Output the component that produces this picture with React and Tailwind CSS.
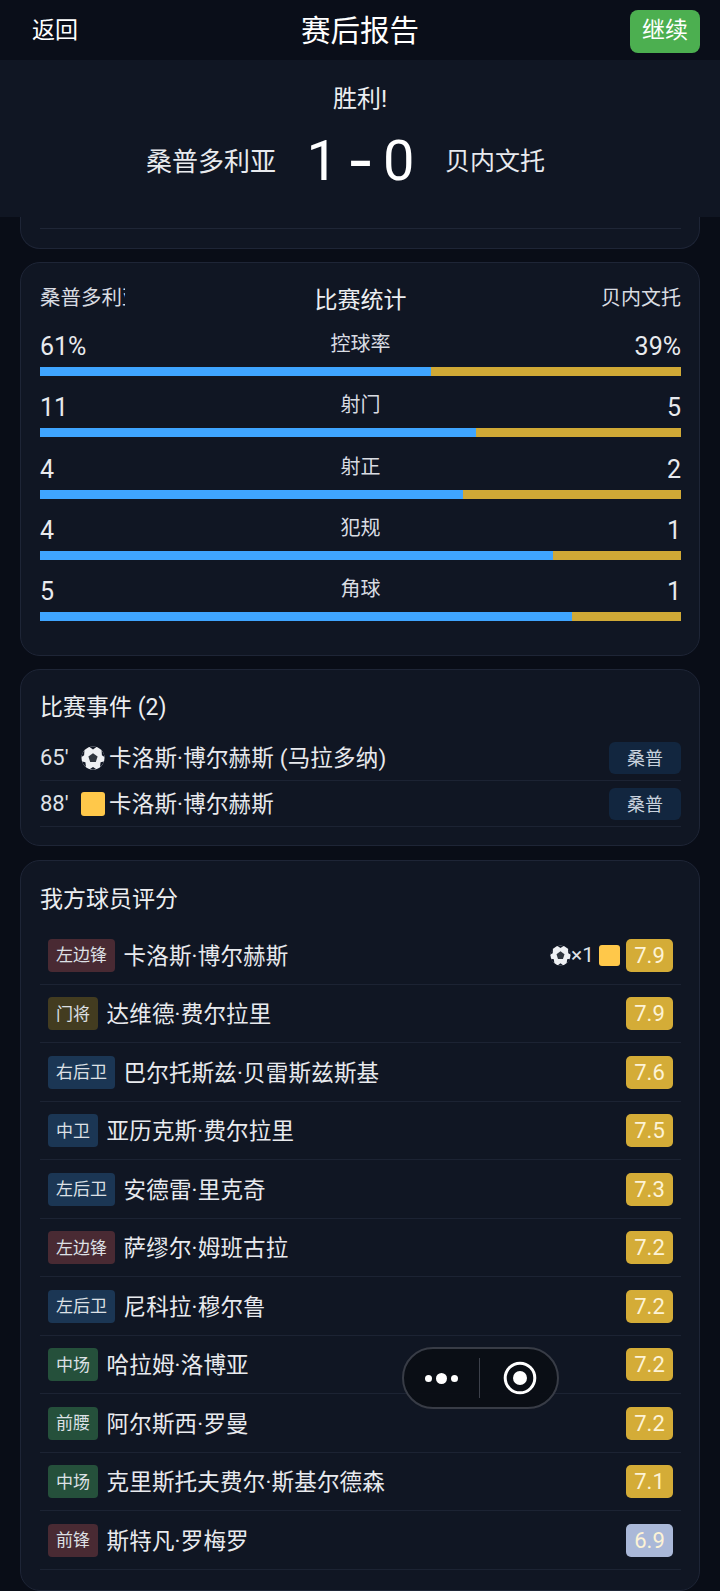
import React from "react";

const fontStack = { fontFamily: 'Roboto, "Noto Sans CJK SC", sans-serif' };

const stats = [
  { label: "控球率", left: "61%", right: "39%", pct: 61 },
  { label: "射门", left: "11", right: "5", pct: 68 },
  { label: "射正", left: "4", right: "2", pct: 66 },
  { label: "犯规", left: "4", right: "1", pct: 80 },
  { label: "角球", left: "5", right: "1", pct: 83 },
];

const players = [
  { pos: "左边锋", tone: "bg-[#492a33]", name: "卡洛斯·博尔赫斯", rating: "7.9", extras: true },
  { pos: "门将", tone: "bg-[#433c20]", name: "达维德·费尔拉里", rating: "7.9" },
  { pos: "右后卫", tone: "bg-[#1b3654]", name: "巴尔托斯兹·贝雷斯兹斯基", rating: "7.6" },
  { pos: "中卫", tone: "bg-[#1b3654]", name: "亚历克斯·费尔拉里", rating: "7.5" },
  { pos: "左后卫", tone: "bg-[#1b3654]", name: "安德雷·里克奇", rating: "7.3" },
  { pos: "左边锋", tone: "bg-[#492a33]", name: "萨缪尔·姆班古拉", rating: "7.2" },
  { pos: "左后卫", tone: "bg-[#1b3654]", name: "尼科拉·穆尔鲁", rating: "7.2" },
  { pos: "中场", tone: "bg-[#25503b]", name: "哈拉姆·洛博亚", rating: "7.2" },
  { pos: "前腰", tone: "bg-[#25503b]", name: "阿尔斯西·罗曼", rating: "7.2" },
  { pos: "中场", tone: "bg-[#25503b]", name: "克里斯托夫费尔·斯基尔德森", rating: "7.1" },
  { pos: "前锋", tone: "bg-[#492a33]", name: "斯特凡·罗梅罗", rating: "6.9", low: true },
];

function Ball({ className }) {
  return (
    <svg viewBox="0 0 24 24" className={className}>
      <circle cx="12" cy="12" r="11.5" fill="#eef0f3" />
      <path d="M12 7.2l4.6 3.3-1.8 5.4H9.2l-1.8-5.4z" fill="#30363f" />
      <path d="M8.6 1.1C9.7.7 10.8.5 12 .5s2.3.2 3.4.6L12 3.4z" fill="#121826" />
      <path d="M20.6 4.3c1.6 1.8 2.6 4 2.9 6.6l-2.6-1.6z" fill="#121826" />
      <path d="M3.4 4.3C1.8 6.1.8 8.3.5 10.900l2.600-1.600z" fill="#121826" />
      <path d="M5 21.100c-1.800-1.400-3.100-3.300-3.900-5.500l3.300.6z" fill="#121826" />
      <path d="M19 21.100c1.800-1.400 3.100-3.300 3.900-5.500l-3.300.6z" fill="#121826" />
      <path d="M9 23.100c2 .5 4 .5 6 0l-3-2.200z" fill="#121826" />
    </svg>
  );
}

function EventRow({ time, icon, text, compact }) {
  return (
    <div className={`flex items-center border-b border-[#1c2333] pb-[6px] ${compact ? "pt-[7px]" : "pt-[8px]"}`}>
      <span className="w-[41px] text-[22px] leading-[32px] text-[#dfe2e8]">{time}</span>
      {icon}
      <span className="ml-[4px] flex-1 text-[22.500px] leading-[32px] tracking-[0.2px] text-[#e8eaee]">{text}</span>
      <span className="flex h-[32px] w-[72px] items-center justify-center rounded-[6px] bg-[#12263f] text-[18px] text-[#c9d2de]">
        桑普
      </span>
    </div>
  );
}

export default function App() {
  return (
    <div
      style={fontStack}
      className="relative flex h-[1591px] w-[720px] flex-col overflow-hidden bg-[#090d17] text-[#e8eaee]"
    >
      {/* top bar */}
      <div className="flex h-[60px] items-center justify-between bg-[#0a0e19] pt-[2px] pr-[20px] pl-[32px]">
        <span className="w-[88px] text-[23px] text-white">返回</span>
        <span className="text-[29.500px] text-white">赛后报告</span>
        <div className="flex w-[100px] justify-end">
          <span className="flex h-[43px] w-[70px] items-center justify-center rounded-[8px] bg-[#4caf50] text-[23px] text-white">
            继续
          </span>
        </div>
      </div>

      {/* score */}
      <div className="flex h-[157px] flex-col items-center bg-[#101623]">
        <div className="mt-[22px] text-[24px] leading-[34px] text-[#eceef1]">胜利!</div>
        <div className="mt-[8px] flex w-full items-center">
          <span className="w-[276px] pt-[2px] text-right text-[26px] text-[#e8eaee]">桑普多利亚</span>
          <span className="w-[169px] text-center text-[56px] leading-[74px] whitespace-pre text-white [word-spacing:-4px]">
            1 <span className="mx-[3px] inline-block scale-x-[1.3] font-medium">-</span> 0
          </span>
          <span className="pt-[2px] text-[25px] text-[#e8eaee]">贝内文托</span>
        </div>
      </div>

      <div className="flex flex-1 flex-col gap-[13px] px-[20px]">
        {/* tail of the card scrolled under the header */}
        <div className="h-[32px] rounded-b-[20px] border border-t-0 border-[#1e2536] bg-[#101623] pt-[11px] pr-[18px] pl-[19px]">
          <div className="border-t border-[#1f2636]" />
        </div>

        {/* match stats */}
        <div className="rounded-[20px] border border-[#1e2536] bg-[#101623] pt-[19px] pr-[18px] pb-[20px] pl-[19px]">
          <div className="mb-[13px] flex h-[34px] items-start justify-between">
            <span className="w-[85px] overflow-hidden text-[20.500px] leading-[32px] whitespace-nowrap text-[#d9dce2]">
              桑普多利亚
            </span>
            <span className="text-[23px] leading-[38px] text-[#eceef1]">比赛统计</span>
            <span className="w-[85px] text-right text-[20px] leading-[32px] text-[#d9dce2]">贝内文托</span>
          </div>
          {stats.map((s) => (
            <div key={s.label} className="mb-[14.300px]">
              <div className="flex h-[38px] items-start justify-between">
                <span className="w-[80px] text-[25px] leading-[36px] text-[#e8eaee]">{s.left}</span>
                <span className="text-[20px] leading-[30px] text-[#d9dce2]">{s.label}</span>
                <span className="w-[80px] text-right text-[25px] leading-[36px] text-[#e8eaee]">{s.right}</span>
              </div>
              <div className="flex h-[9px] bg-[#d0a936]">
                <div className="h-full bg-[#3fa5ff]" style={{ width: `${s.pct}%` }} />
              </div>
            </div>
          ))}
        </div>

        {/* events */}
        <div className="rounded-[20px] border border-[#1e2536] bg-[#101623] pt-[22px] pr-[18px] pb-[18px] pl-[19px]">
          <div className="mb-[10px] text-[23px] leading-[32px] text-[#eceef1]">比赛事件 (2)</div>
          <EventRow
            time="65'"
            icon={<Ball className="h-[24px] w-[24px]" />}
            text="卡洛斯·博尔赫斯 (马拉多纳)"
          />
          <EventRow
            compact
            time="88'"
            icon={<span className="h-[24px] w-[24px] rounded-[3px] bg-[#ffc84a]" />}
            text="卡洛斯·博尔赫斯"
          />
        </div>

        {/* player ratings */}
        <div className="mt-px flex-1 rounded-[20px] border border-[#1e2536] bg-[#101623] pt-[23px] pr-[18px] pl-[19px]">
          <div className="mb-[10px] text-[23px] leading-[32px] text-[#eceef1]">我方球员评分</div>
          {players.map((p, i) => (
            <div key={i} className="flex h-[58.500px] items-center border-b border-[#1c2333] px-[8px]">
              <span className={`flex h-[33px] items-center rounded-[4px] px-[8px] pt-[2px] text-[17px] text-[#dde0e5] ${p.tone}`}>
                {p.pos}
              </span>
              <span className="ml-[8.500px] flex-1 pt-[3px] text-[22.500px] tracking-[0.2px] text-[#e8eaee]">{p.name}</span>
              {p.extras && (
                <div className="mr-[6px] flex items-center">
                  <Ball className="h-[21px] w-[21px]" />
                  <span className="mr-[5px] text-[21px] leading-none text-[#dfe2e8]">×1</span>
                  <span className="h-[21px] w-[21px] rounded-[3px] bg-[#ffc84a]" />
                </div>
              )}
              <span
                className={`flex h-[33px] w-[47px] items-center justify-center rounded-[5px] text-[22px] text-[#fdf3d6] ${
                  p.low ? "bg-[#aab8d8]" : "bg-[#d4ac37]"
                }`}
              >
                {p.rating}
              </span>
            </div>
          ))}
        </div>
      </div>

      {/* mini program capsule */}
      <div className="absolute top-[1347px] left-[402px] flex h-[62px] w-[157px] items-center rounded-full border-2 border-[#383c46] bg-[#0b0e15]/95">
        <div className="flex w-[75px] items-center justify-center gap-[4px]">
          <span className="h-[7px] w-[7px] rounded-full bg-white" />
          <span className="h-[11px] w-[11px] rounded-full bg-white" />
          <span className="h-[7px] w-[7px] rounded-full bg-white" />
        </div>
        <div className="h-[40px] w-px bg-[#3c404a]" />
        <div className="flex flex-1 items-center justify-center pl-[2px]">
          <svg viewBox="0 0 34 34" className="h-[34px] w-[34px]">
            <circle cx="17" cy="17" r="14.800" fill="none" stroke="#fff" strokeWidth="3" />
            <circle cx="17" cy="17" r="7" fill="#fff" />
          </svg>
        </div>
      </div>
    </div>
  );
}
